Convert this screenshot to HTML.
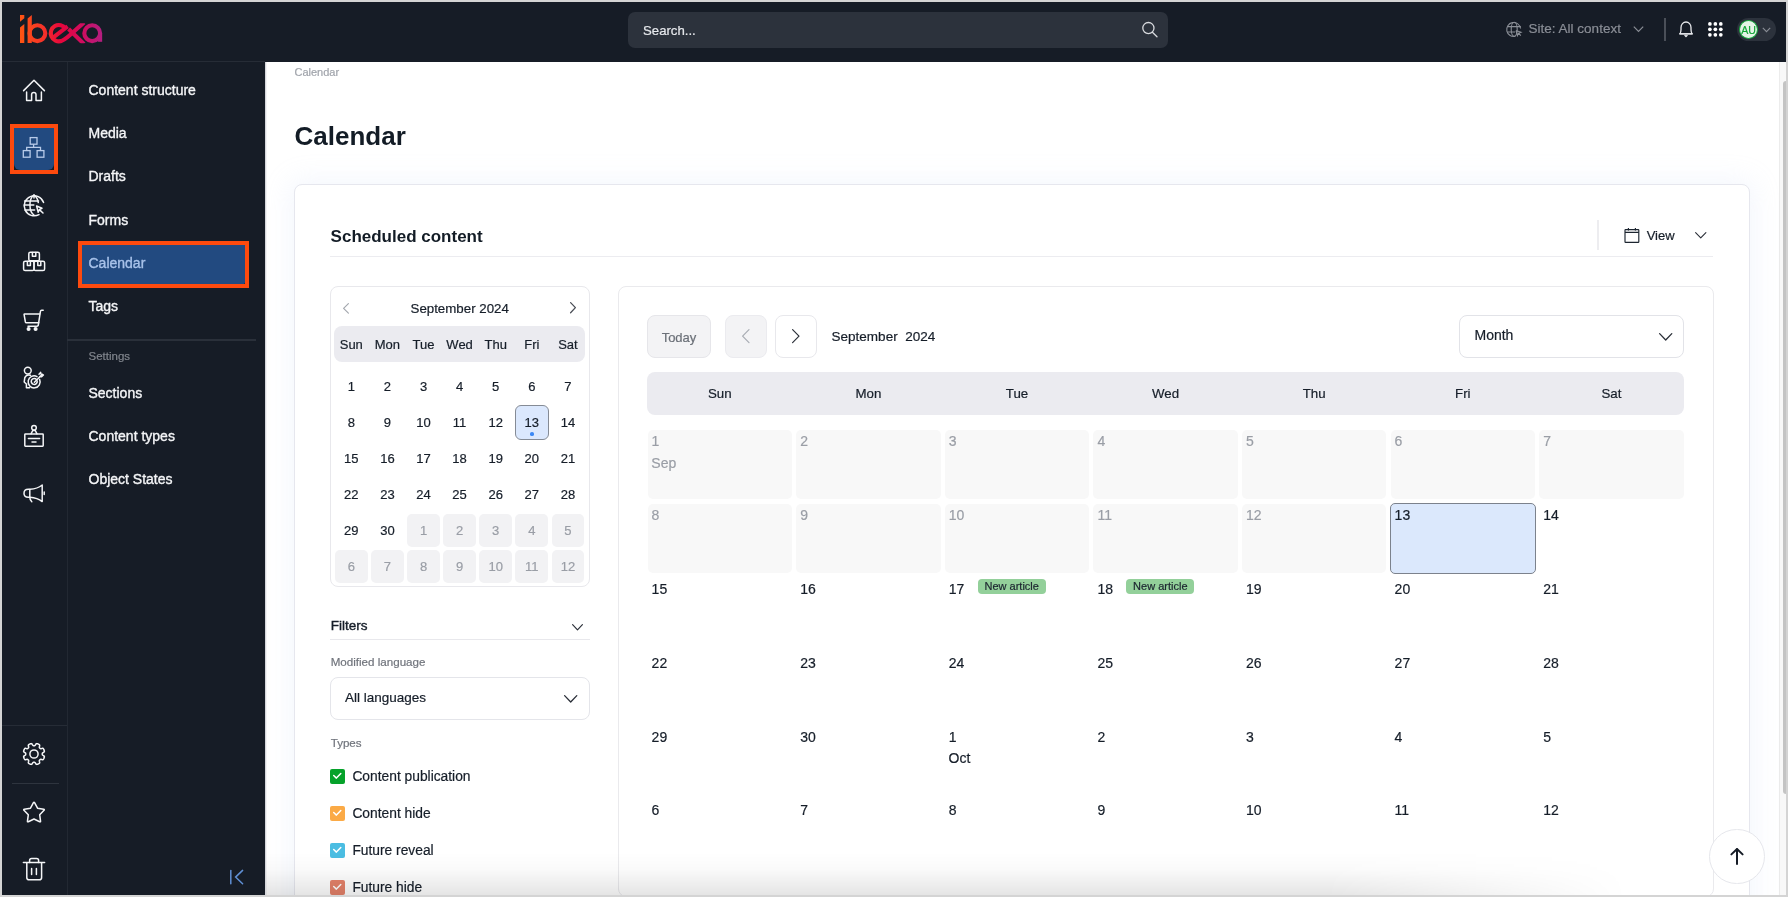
<!DOCTYPE html>
<html><head><meta charset="utf-8">
<style>
html,body{margin:0;padding:0;}
body{width:1788px;height:897px;overflow:hidden;background:#d4d4d4;position:relative;font-family:"Liberation Sans",sans-serif;-webkit-font-smoothing:antialiased;}
#root{position:absolute;left:0;top:0;width:1788px;height:897px;will-change:transform;}
.t{position:absolute;white-space:nowrap;line-height:1;-webkit-text-stroke-width:0.2px;}
.r{position:absolute;box-sizing:border-box;}
svg{position:absolute;overflow:visible;}
</style></head><body><div id="root">
<div class="r" style="left:2px;top:2px;width:1784px;height:893px;background:#ffffff;"></div><div class="r" style="left:2px;top:2px;width:1784px;height:60px;background:#161c26;"></div><div class="r" style="left:2px;top:61px;width:263px;height:1px;background:#262c36;"></div><svg style="left:0;top:0" width="120" height="60" viewBox="0 0 120 60">
<defs><linearGradient id="lg" x1="20" y1="0" x2="102" y2="0" gradientUnits="userSpaceOnUse">
<stop offset="0" stop-color="#ff5512"/><stop offset="0.3" stop-color="#f5302a"/><stop offset="0.5" stop-color="#e6063c"/><stop offset="0.75" stop-color="#d10c5e"/><stop offset="1" stop-color="#b41e80"/></linearGradient><clipPath id="xc"><rect x="0" y="23.3" width="120" height="19.9"/></clipPath></defs>
<g fill="url(#lg)" stroke="none">
<path d="M20 15 L24.3 15 L24.3 18.2 L20 21.8 Z"/>
<path d="M20 27.6 L24.3 24 L24.3 43 L20 43 Z"/>
<path d="M27.6 18.6 L31.8 15 L31.8 43 L27.6 43 Z"/>
</g>
<g fill="none" stroke="url(#lg)" stroke-width="4.1">
<circle cx="37.4" cy="33.2" r="7.9"/>
<path d="M65.6 28.4 A8.2 8.2 0 1 0 61.4 41"/>
<path clip-path="url(#xc)" d="M59.5 41.6 C63 41 66 38.6 70 35 L84 22.4"/>
<path d="M53.4 37.4 L67.6 26.4"/>
<path clip-path="url(#xc)" d="M68.6 29 L84 44"/>
<circle cx="92.2" cy="33.2" r="7.9"/>
<path d="M100.1 33.2 V41.8"/>
</g>
</svg><div class="r" style="left:628px;top:12px;width:540px;height:36px;background:#2c323c;border-radius:7px;"></div><div class="t " style="left:643px;top:23.73px;font-size:13.2px;color:#e6e8ec;font-weight:400;">Search...</div><svg style="left:1140px;top:20px" width="20" height="20" viewBox="0 0 20 20">
<circle cx="8.4" cy="8.1" r="5.6" fill="none" stroke="#d8dade" stroke-width="1.3"/>
<path d="M12.4 12.2 L17 16.8" stroke="#d8dade" stroke-width="1.3" stroke-linecap="round"/></svg><svg style="left:1506px;top:21px" width="17" height="17" viewBox="0 0 17 17">
<g fill="none" stroke="#8a8e96" stroke-width="1.1">
<path d="M14.6 7.5 A7 7 0 1 0 9.5 15.3"/>
<ellipse cx="8.2" cy="8.3" rx="3" ry="7"/>
<path d="M1.4 5.6 H14.8 M1.4 11 H9"/>
<path d="M10 9.5 L15 11.3 L12.6 12.2 L14.8 14.6 M10 9.5 L11.4 14.6 L12.4 12.3"/>
</g></svg><div class="t " style="left:1528.6px;top:21.67px;font-size:13.5px;color:#8a8e96;font-weight:400;">Site: All context</div><svg style="left:1632px;top:24px" width="13" height="10" viewBox="0 0 13 10">
<path d="M1.8 2.6 L6.5 7.4 L11.2 2.6" fill="none" stroke="#8a8e96" stroke-width="1.2"/></svg><div class="r" style="left:1664px;top:18px;width:2px;height:23px;background:#4a4f58;"></div><svg style="left:1676px;top:19px" width="20" height="21" viewBox="0 0 20 21">
<g fill="none" stroke="#e8e9ec" stroke-width="1.3" stroke-linejoin="round">
<path d="M4 14.8 C4.6 13.6 5 12.6 5 10.6 L5 8.5 C5 5.4 7.2 3 10 3 C12.8 3 15 5.4 15 8.5 L15 10.6 C15 12.6 15.4 13.6 16 14.8 Z"/>
<path d="M3.2 14.8 H16.8"/>
<path d="M8.6 16 L10 17.6 L11.4 16"/>
</g></svg><svg style="left:1708.1px;top:22.2px" width="15" height="15" viewBox="0 0 15 15"><g fill="#ffffff"><circle cx="1.90" cy="1.90" r="1.85"/><circle cx="1.90" cy="7.35" r="1.85"/><circle cx="1.90" cy="12.80" r="1.85"/><circle cx="7.35" cy="1.90" r="1.85"/><circle cx="7.35" cy="7.35" r="1.85"/><circle cx="7.35" cy="12.80" r="1.85"/><circle cx="12.80" cy="1.90" r="1.85"/><circle cx="12.80" cy="7.35" r="1.85"/><circle cx="12.80" cy="12.80" r="1.85"/></g></svg><div class="r" style="left:1737px;top:18px;width:39px;height:23px;background:#2c323c;border-radius:12px;"></div><div class="r" style="left:1739.2px;top:19.9px;width:18.8px;height:19px;background:#e4f4e6;border:1.3px solid #16a83c;border-radius:50%;"></div><div class="t" style="left:1648.6px;width:200px;text-align:center;top:24.73px;font-size:10.6px;color:#12a536;font-weight:400;">AU</div><svg style="left:1761px;top:25px" width="11" height="9" viewBox="0 0 11 9">
<path d="M1.8 2.8 L5.5 6.6 L9.2 2.8" fill="none" stroke="#8a8e96" stroke-width="1.1"/></svg><div class="r" style="left:2px;top:62px;width:263px;height:833px;background:#161c26;"></div><div class="r" style="left:67px;top:62px;width:1px;height:833px;background:#222832;"></div><svg style="left:14px;top:70px" width="40" height="40" viewBox="0 0 40 40"><g fill="none" stroke="#f4f5f7" stroke-width="1.5" stroke-linecap="round" stroke-linejoin="round"><path d="M9.6 20.6 L20 10.3 L30.4 20.6"/><path d="M12.6 22 V30.4 H17.6 V24.6 A2.2 2.2 0 0 1 22 24.6 V30.4 H27.4 V22"/></g></svg><div class="r" style="left:10px;top:124px;width:48px;height:50px;border:4px solid #fd4a0e;"></div><div class="r" style="left:14px;top:128px;width:40px;height:42px;background:#224a80;border-radius:0 0 6px 6px;"></div><svg style="left:14px;top:128px" width="40" height="42" viewBox="0 0 40 42"><g fill="none" stroke="#b8cbe9" stroke-width="1.3"><rect x="16.2" y="9.6" width="6.8" height="6.6"/><rect x="9.3" y="22.6" width="6.8" height="6.6"/><rect x="23.1" y="22.6" width="6.8" height="6.6"/><path d="M19.6 16.2 V19.4 M12.7 22.6 V19.4 H26.5 V22.6"/></g></svg><svg style="left:14px;top:185px" width="40" height="40" viewBox="0 0 40 40"><g fill="none" stroke="#f4f5f7" stroke-width="1.5" stroke-linecap="round" stroke-linejoin="round"><path d="M29.6 17.4 A10 10 0 1 0 25 29.6"/><path d="M20 10 C14.6 13.6 14.6 26.4 20 30 M20 10 C22.6 12 24 14.6 24.3 17.6"/><path d="M10.6 16 H24.5 M10.2 20 H19.8 M11 25 H20.6 M20 10 V13"/><path d="M22.6 21 L28 23.3 L25.4 24.6 L29 28 M22.6 21 L24.2 27.2 L25.4 24.6"/></g></svg><svg style="left:14px;top:242px" width="40" height="40" viewBox="0 0 40 40"><g fill="none" stroke="#f4f5f7" stroke-width="1.5" stroke-linecap="round" stroke-linejoin="round"><rect x="14.8" y="10.2" width="10.6" height="8.6" rx="1.6"/><path d="M18.4 10.4 V14.2 H21.8 V10.4"/><rect x="9.6" y="19.2" width="10.4" height="9.4" rx="1.6"/><rect x="20" y="19.2" width="10.6" height="9.4" rx="1.6"/><path d="M13.4 19.4 V23.4 H16.4 V19.4 M23.8 19.4 V23.4 H26.8 V19.4"/></g></svg><svg style="left:14px;top:300px" width="40" height="40" viewBox="0 0 40 40"><g fill="none" stroke="#f4f5f7" stroke-width="1.5" stroke-linecap="round" stroke-linejoin="round"><path d="M29.2 10.3 H27.6 Q26.6 10.3 26.4 11.6 L24.2 25.6 Q24 26.2 23.2 26.2 H14"/><path d="M25.6 14 H10.4 Q10 14 10.1 14.6 L11.4 22 Q11.6 22.8 12.4 22.8 H24.8"/><circle cx="14.6" cy="29" r="1.3" fill="#f4f5f7"/><circle cx="21.6" cy="29" r="1.3" fill="#f4f5f7"/></g></svg><svg style="left:14px;top:358px" width="40" height="40" viewBox="0 0 40 40"><g fill="none" stroke="#f4f5f7" stroke-width="1.5" stroke-linecap="round" stroke-linejoin="round"><circle cx="13.8" cy="12.6" r="3.4"/><path d="M16.4 17.2 C14 16.6 11.8 17.6 10.8 19.6 L10.2 24 L12.4 26 V29.8 H15.6"/><path d="M25.6 21.4 A6 6 0 1 1 23 18.6"/><path d="M22.6 21.6 A3 3 0 1 0 23.2 23"/><path d="M20.4 24.2 L28.4 16.2"/><path d="M25 16.2 L26.6 14.4 L27.2 16.4 L29.4 17 L27.6 18.8 L25.8 18.4"/></g></svg><svg style="left:14px;top:415px" width="40" height="40" viewBox="0 0 40 40"><g fill="none" stroke="#f4f5f7" stroke-width="1.5" stroke-linecap="round" stroke-linejoin="round"><circle cx="20" cy="12.8" r="2.3"/><path d="M17 18.8 L18.8 15.4 H21.2 L23 18.8"/><rect x="10.8" y="19" width="18.4" height="12.2" rx="0.6"/><path d="M14.4 23.4 H25.6 M18 27 H22"/></g></svg><svg style="left:14px;top:473px" width="40" height="40" viewBox="0 0 40 40"><g fill="none" stroke="#f4f5f7" stroke-width="1.5" stroke-linecap="round" stroke-linejoin="round"><path d="M28.2 12 V28.6 C25 26 21 24.6 16 24.2 H14.2 C11.4 24.2 10 22.6 10 20.2 C10 17.8 11.4 16.2 14.2 16.2 H16 C21 16 25 14.6 28.2 12 Z"/><path d="M15.8 16.4 V24 C15.8 26 16.4 27.6 17.8 28.8"/><path d="M30.2 19 V21.6"/></g></svg><div class="r" style="left:2px;top:725px;width:65px;height:1px;background:#262c36;"></div><svg style="left:14px;top:734px" width="40" height="40" viewBox="0 0 40 40"><g fill="none" stroke="#f4f5f7" stroke-width="1.5" stroke-linecap="round" stroke-linejoin="round"><path d="M20.00 11.75 L20.22 11.74 L20.43 11.73 L20.65 11.68 L20.89 11.57 L21.15 11.30 L21.46 10.81 L21.81 10.21 L22.17 9.80 L22.49 9.64 L22.78 9.62 L23.06 9.66 L23.33 9.74 L23.60 9.82 L23.87 9.92 L24.13 10.02 L24.39 10.13 L24.65 10.25 L24.90 10.38 L25.14 10.53 L25.37 10.69 L25.57 10.92 L25.68 11.26 L25.64 11.80 L25.47 12.47 L25.34 13.04 L25.34 13.41 L25.42 13.65 L25.54 13.84 L25.69 14.01 L25.84 14.16 L25.99 14.31 L26.16 14.46 L26.35 14.58 L26.59 14.66 L26.96 14.66 L27.53 14.53 L28.20 14.36 L28.74 14.32 L29.08 14.43 L29.31 14.63 L29.47 14.86 L29.62 15.10 L29.75 15.35 L29.87 15.61 L29.98 15.87 L30.08 16.13 L30.18 16.40 L30.26 16.67 L30.34 16.94 L30.38 17.22 L30.36 17.51 L30.20 17.83 L29.79 18.19 L29.19 18.54 L28.70 18.85 L28.43 19.11 L28.32 19.35 L28.27 19.57 L28.26 19.78 L28.25 20.00 L28.26 20.22 L28.27 20.43 L28.32 20.65 L28.43 20.89 L28.70 21.15 L29.19 21.46 L29.79 21.81 L30.20 22.17 L30.36 22.49 L30.38 22.78 L30.34 23.06 L30.26 23.33 L30.18 23.60 L30.08 23.87 L29.98 24.13 L29.87 24.39 L29.75 24.65 L29.62 24.90 L29.47 25.14 L29.31 25.37 L29.08 25.57 L28.74 25.68 L28.20 25.64 L27.53 25.47 L26.96 25.34 L26.59 25.34 L26.35 25.42 L26.16 25.54 L25.99 25.69 L25.84 25.84 L25.69 25.99 L25.54 26.16 L25.42 26.35 L25.34 26.59 L25.34 26.96 L25.47 27.53 L25.64 28.20 L25.68 28.74 L25.57 29.08 L25.37 29.31 L25.14 29.47 L24.90 29.62 L24.65 29.75 L24.39 29.87 L24.13 29.98 L23.87 30.08 L23.60 30.18 L23.33 30.26 L23.06 30.34 L22.78 30.38 L22.49 30.36 L22.17 30.20 L21.81 29.79 L21.46 29.19 L21.15 28.70 L20.89 28.43 L20.65 28.32 L20.43 28.27 L20.22 28.26 L20.00 28.25 L19.78 28.26 L19.57 28.27 L19.35 28.32 L19.11 28.43 L18.85 28.70 L18.54 29.19 L18.19 29.79 L17.83 30.20 L17.51 30.36 L17.22 30.38 L16.94 30.34 L16.67 30.26 L16.40 30.18 L16.13 30.08 L15.87 29.98 L15.61 29.87 L15.35 29.75 L15.10 29.62 L14.86 29.47 L14.63 29.31 L14.43 29.08 L14.32 28.74 L14.36 28.20 L14.53 27.53 L14.66 26.96 L14.66 26.59 L14.58 26.35 L14.46 26.16 L14.31 25.99 L14.16 25.84 L14.01 25.69 L13.84 25.54 L13.65 25.42 L13.41 25.34 L13.04 25.34 L12.47 25.47 L11.80 25.64 L11.26 25.68 L10.92 25.57 L10.69 25.37 L10.53 25.14 L10.38 24.90 L10.25 24.65 L10.13 24.39 L10.02 24.13 L9.92 23.87 L9.82 23.60 L9.74 23.33 L9.66 23.06 L9.62 22.78 L9.64 22.49 L9.80 22.17 L10.21 21.81 L10.81 21.46 L11.30 21.15 L11.57 20.89 L11.68 20.65 L11.73 20.43 L11.74 20.22 L11.75 20.00 L11.74 19.78 L11.73 19.57 L11.68 19.35 L11.57 19.11 L11.30 18.85 L10.81 18.54 L10.21 18.19 L9.80 17.83 L9.64 17.51 L9.62 17.22 L9.66 16.94 L9.74 16.67 L9.82 16.40 L9.92 16.13 L10.02 15.87 L10.13 15.61 L10.25 15.35 L10.38 15.10 L10.53 14.86 L10.69 14.63 L10.92 14.43 L11.26 14.32 L11.80 14.36 L12.47 14.53 L13.04 14.66 L13.41 14.66 L13.65 14.58 L13.84 14.46 L14.01 14.31 L14.16 14.16 L14.31 14.01 L14.46 13.84 L14.58 13.65 L14.66 13.41 L14.66 13.04 L14.53 12.47 L14.36 11.80 L14.32 11.26 L14.43 10.92 L14.63 10.69 L14.86 10.53 L15.10 10.38 L15.35 10.25 L15.61 10.13 L15.87 10.02 L16.13 9.92 L16.40 9.82 L16.67 9.74 L16.94 9.66 L17.22 9.62 L17.51 9.64 L17.83 9.80 L18.19 10.21 L18.54 10.81 L18.85 11.30 L19.11 11.57 L19.35 11.68 L19.57 11.73 L19.78 11.74 Z"/><circle cx="20" cy="20" r="4.1"/></g></svg><div class="r" style="left:12px;top:783px;width:47px;height:1px;background:#2e343e;"></div><svg style="left:14px;top:792px" width="40" height="40" viewBox="0 0 40 40"><g fill="none" stroke="#f4f5f7" stroke-width="1.5" stroke-linecap="round" stroke-linejoin="round"><path d="M19.44 10.65 Q20.00 9.60 20.56 10.65 L23.53 16.15 L29.67 17.26 Q30.84 17.48 30.02 18.34 L25.71 22.85 L26.54 29.04 Q26.70 30.22 25.63 29.71 L20.00 27.00 L14.37 29.71 Q13.30 30.22 13.46 29.04 L14.29 22.85 L9.98 18.34 Q9.16 17.48 10.33 17.26 L16.47 16.15 Z"/></g></svg><svg style="left:14px;top:849px" width="40" height="40" viewBox="0 0 40 40"><g fill="none" stroke="#f4f5f7" stroke-width="1.5" stroke-linecap="round" stroke-linejoin="round"><path d="M9.4 13.6 H30.6"/><path d="M15.6 13.4 V11.6 Q15.6 9.6 17.6 9.6 H22.6 Q24.6 9.6 24.6 11.6 V13.4"/><path d="M12.8 13.8 V28.4 Q12.8 30.8 15.2 30.8 H25.2 Q27.6 30.8 27.6 28.4 V13.8"/><path d="M17.6 19.4 V25.6 M22.4 19.4 V25.6"/></g></svg><div class="t " style="left:88.5px;top:83.25px;font-size:14px;color:#f4f5f7;font-weight:400;-webkit-text-stroke:0.35px #f4f5f7;">Content structure</div><div class="t " style="left:88.5px;top:126.35px;font-size:14px;color:#f4f5f7;font-weight:400;-webkit-text-stroke:0.35px #f4f5f7;">Media</div><div class="t " style="left:88.5px;top:169.45px;font-size:14px;color:#f4f5f7;font-weight:400;-webkit-text-stroke:0.35px #f4f5f7;">Drafts</div><div class="t " style="left:88.5px;top:212.55px;font-size:14px;color:#f4f5f7;font-weight:400;-webkit-text-stroke:0.35px #f4f5f7;">Forms</div><div class="r" style="left:82px;top:244.5px;width:164px;height:40px;background:#224a80;border-radius:0 0 5px 0;"></div><div class="r" style="left:78px;top:241px;width:171px;height:47px;border:4px solid #fd4a0e;"></div><div class="t " style="left:88.5px;top:256.35px;font-size:14px;color:#a9c3ea;font-weight:400;-webkit-text-stroke:0.35px #a9c3ea;">Calendar</div><div class="t " style="left:88.5px;top:298.95px;font-size:14px;color:#f4f5f7;font-weight:400;-webkit-text-stroke:0.35px #f4f5f7;">Tags</div><div class="r" style="left:67px;top:339px;width:189px;height:1.5px;background:#2a303a;"></div><div class="t " style="left:88.5px;top:351.27px;font-size:11.5px;color:#80858d;font-weight:400;">Settings</div><div class="t " style="left:88.5px;top:385.85px;font-size:14px;color:#f4f5f7;font-weight:400;-webkit-text-stroke:0.35px #f4f5f7;">Sections</div><div class="t " style="left:88.5px;top:428.95px;font-size:14px;color:#f4f5f7;font-weight:400;-webkit-text-stroke:0.35px #f4f5f7;">Content types</div><div class="t " style="left:88.5px;top:472.05px;font-size:14px;color:#f4f5f7;font-weight:400;-webkit-text-stroke:0.35px #f4f5f7;">Object States</div><svg style="left:226px;top:866px" width="20" height="22" viewBox="0 0 20 22"><g fill="none" stroke="#5f8fd4" stroke-width="1.5" stroke-linecap="round"><path d="M4.8 4.4 V17.8"/><path d="M16.6 4.4 L9.6 11.1 L16.6 17.8"/></g></svg><div style="position:absolute;left:0;top:0;width:1788px;height:897px;clip-path:inset(62px 2px 2px 265px);"><div class="r" style="left:1779px;top:62px;width:7px;height:833px;background:#f8f8f8;border-left:1px solid #ececec;"></div><div class="r" style="left:1783px;top:81px;width:3px;height:713px;background:#c4c4c4;border-radius:3px 0 0 3px;"></div><div class="r" style="left:265px;top:62px;width:1px;height:833px;background:#d6d7db;"></div><div class="r" style="left:266px;top:62px;width:1px;height:833px;background:#f3f3f5;"></div><div class="t " style="left:294.5px;top:67.19px;font-size:11px;color:#a0a4ab;font-weight:400;">Calendar</div><div class="t " style="left:294.5px;top:123.29px;font-size:26px;color:#131c26;font-weight:700;-webkit-text-stroke-width:0;">Calendar</div><div class="r" style="left:294px;top:184px;width:1456px;height:760px;background:#fff;border:1px solid #e6e7ee;border-radius:8px;box-shadow:0 0 26px 5px rgba(190,205,245,0.17);"></div><div class="t " style="left:330.6px;top:227.51px;font-size:17px;color:#131c26;font-weight:700;-webkit-text-stroke-width:0;">Scheduled content</div><div class="r" style="left:330px;top:256px;width:1383px;height:1px;background:#ececf0;"></div><div class="r" style="left:1597px;top:220px;width:1.5px;height:30px;background:#ededf0;"></div><svg style="left:1623px;top:226px" width="18" height="18" viewBox="0 0 18 18"><g fill="none" stroke="#1c2530" stroke-width="1.15"><rect x="2" y="3.6" width="13.8" height="12.8" rx="0.6"/><path d="M2 6.4 H15.8 M5.4 2 V4.6 M12.4 2 V4.6"/></g></svg><div class="t " style="left:1646.7px;top:228.50px;font-size:13px;color:#161e29;font-weight:400;">View</div><svg style="left:1694.5px;top:232px" width="11.5" height="6.5" viewBox="0 0 11.5 6.5"><path d="M0.6 0.6 L5.75 5.9 L10.9 0.6" fill="none" stroke="#2a2f38" stroke-width="1.1" stroke-linecap="round" stroke-linejoin="round"/></svg><div class="r" style="left:330px;top:286px;width:260px;height:301px;background:#fff;border:1px solid #e8e8ec;border-radius:8px;"></div><svg style="left:343.3px;top:302.5px" width="6" height="10.8" viewBox="0 0 6 10.8"><path d="M5.4 0.6 L0.6 5.4 L5.4 10.200000000000001" fill="none" stroke="#a3a7ae" stroke-width="1.15" stroke-linecap="round" stroke-linejoin="round"/></svg><svg style="left:569.6px;top:302.2px" width="6" height="11.4" viewBox="0 0 6 11.4"><path d="M0.6 0.6 L5.4 5.7 L0.6 10.8" fill="none" stroke="#484c54" stroke-width="1.25" stroke-linecap="round" stroke-linejoin="round"/></svg><div class="t" style="left:359.7px;width:200px;text-align:center;top:301.54px;font-size:13.3px;color:#161e29;font-weight:400;">September 2024</div><div class="r" style="left:334px;top:326px;width:251px;height:36px;background:#ebebf0;border-radius:8px;"></div><div class="t" style="left:251.3px;width:200px;text-align:center;top:337.60px;font-size:13px;color:#161e29;font-weight:400;">Sun</div><div class="t" style="left:287.40000000000003px;width:200px;text-align:center;top:337.60px;font-size:13px;color:#161e29;font-weight:400;">Mon</div><div class="t" style="left:323.5px;width:200px;text-align:center;top:337.60px;font-size:13px;color:#161e29;font-weight:400;">Tue</div><div class="t" style="left:359.6px;width:200px;text-align:center;top:337.60px;font-size:13px;color:#161e29;font-weight:400;">Wed</div><div class="t" style="left:395.70000000000005px;width:200px;text-align:center;top:337.60px;font-size:13px;color:#161e29;font-weight:400;">Thu</div><div class="t" style="left:431.79999999999995px;width:200px;text-align:center;top:337.60px;font-size:13px;color:#161e29;font-weight:400;">Fri</div><div class="t" style="left:467.9000000000001px;width:200px;text-align:center;top:337.60px;font-size:13px;color:#161e29;font-weight:400;">Sat</div><div class="t" style="left:251.3px;width:200px;text-align:center;top:380.00px;font-size:13px;color:#161e29;font-weight:400;">1</div><div class="t" style="left:287.40000000000003px;width:200px;text-align:center;top:380.00px;font-size:13px;color:#161e29;font-weight:400;">2</div><div class="t" style="left:323.5px;width:200px;text-align:center;top:380.00px;font-size:13px;color:#161e29;font-weight:400;">3</div><div class="t" style="left:359.6px;width:200px;text-align:center;top:380.00px;font-size:13px;color:#161e29;font-weight:400;">4</div><div class="t" style="left:395.70000000000005px;width:200px;text-align:center;top:380.00px;font-size:13px;color:#161e29;font-weight:400;">5</div><div class="t" style="left:431.79999999999995px;width:200px;text-align:center;top:380.00px;font-size:13px;color:#161e29;font-weight:400;">6</div><div class="t" style="left:467.9000000000001px;width:200px;text-align:center;top:380.00px;font-size:13px;color:#161e29;font-weight:400;">7</div><div class="t" style="left:251.3px;width:200px;text-align:center;top:416.00px;font-size:13px;color:#161e29;font-weight:400;">8</div><div class="t" style="left:287.40000000000003px;width:200px;text-align:center;top:416.00px;font-size:13px;color:#161e29;font-weight:400;">9</div><div class="t" style="left:323.5px;width:200px;text-align:center;top:416.00px;font-size:13px;color:#161e29;font-weight:400;">10</div><div class="t" style="left:359.6px;width:200px;text-align:center;top:416.00px;font-size:13px;color:#161e29;font-weight:400;">11</div><div class="t" style="left:395.70000000000005px;width:200px;text-align:center;top:416.00px;font-size:13px;color:#161e29;font-weight:400;">12</div><div class="r" style="left:515.2px;top:405.1px;width:33.8px;height:34.5px;background:#dbe8fd;border:1.2px solid #858b95;border-radius:6px;"></div><div class="r" style="left:529.9px;top:432.1px;width:3.7px;height:3.7px;background:#3b88f5;border-radius:50%;"></div><div class="t" style="left:431.79999999999995px;width:200px;text-align:center;top:416.00px;font-size:13px;color:#161e29;font-weight:400;">13</div><div class="t" style="left:467.9000000000001px;width:200px;text-align:center;top:416.00px;font-size:13px;color:#161e29;font-weight:400;">14</div><div class="t" style="left:251.3px;width:200px;text-align:center;top:452.00px;font-size:13px;color:#161e29;font-weight:400;">15</div><div class="t" style="left:287.40000000000003px;width:200px;text-align:center;top:452.00px;font-size:13px;color:#161e29;font-weight:400;">16</div><div class="t" style="left:323.5px;width:200px;text-align:center;top:452.00px;font-size:13px;color:#161e29;font-weight:400;">17</div><div class="t" style="left:359.6px;width:200px;text-align:center;top:452.00px;font-size:13px;color:#161e29;font-weight:400;">18</div><div class="t" style="left:395.70000000000005px;width:200px;text-align:center;top:452.00px;font-size:13px;color:#161e29;font-weight:400;">19</div><div class="t" style="left:431.79999999999995px;width:200px;text-align:center;top:452.00px;font-size:13px;color:#161e29;font-weight:400;">20</div><div class="t" style="left:467.9000000000001px;width:200px;text-align:center;top:452.00px;font-size:13px;color:#161e29;font-weight:400;">21</div><div class="t" style="left:251.3px;width:200px;text-align:center;top:488.00px;font-size:13px;color:#161e29;font-weight:400;">22</div><div class="t" style="left:287.40000000000003px;width:200px;text-align:center;top:488.00px;font-size:13px;color:#161e29;font-weight:400;">23</div><div class="t" style="left:323.5px;width:200px;text-align:center;top:488.00px;font-size:13px;color:#161e29;font-weight:400;">24</div><div class="t" style="left:359.6px;width:200px;text-align:center;top:488.00px;font-size:13px;color:#161e29;font-weight:400;">25</div><div class="t" style="left:395.70000000000005px;width:200px;text-align:center;top:488.00px;font-size:13px;color:#161e29;font-weight:400;">26</div><div class="t" style="left:431.79999999999995px;width:200px;text-align:center;top:488.00px;font-size:13px;color:#161e29;font-weight:400;">27</div><div class="t" style="left:467.9000000000001px;width:200px;text-align:center;top:488.00px;font-size:13px;color:#161e29;font-weight:400;">28</div><div class="t" style="left:251.3px;width:200px;text-align:center;top:524.00px;font-size:13px;color:#161e29;font-weight:400;">29</div><div class="t" style="left:287.40000000000003px;width:200px;text-align:center;top:524.00px;font-size:13px;color:#161e29;font-weight:400;">30</div><div class="r" style="left:407.1px;top:513.8px;width:32.8px;height:32.8px;background:#f2f2f4;border-radius:5px;"></div><div class="t" style="left:323.5px;width:200px;text-align:center;top:524.00px;font-size:13px;color:#9a9ea6;font-weight:400;">1</div><div class="r" style="left:443.20000000000005px;top:513.8px;width:32.8px;height:32.8px;background:#f2f2f4;border-radius:5px;"></div><div class="t" style="left:359.6px;width:200px;text-align:center;top:524.00px;font-size:13px;color:#9a9ea6;font-weight:400;">2</div><div class="r" style="left:479.30000000000007px;top:513.8px;width:32.8px;height:32.8px;background:#f2f2f4;border-radius:5px;"></div><div class="t" style="left:395.70000000000005px;width:200px;text-align:center;top:524.00px;font-size:13px;color:#9a9ea6;font-weight:400;">3</div><div class="r" style="left:515.4px;top:513.8px;width:32.8px;height:32.8px;background:#f2f2f4;border-radius:5px;"></div><div class="t" style="left:431.79999999999995px;width:200px;text-align:center;top:524.00px;font-size:13px;color:#9a9ea6;font-weight:400;">4</div><div class="r" style="left:551.5000000000001px;top:513.8px;width:32.8px;height:32.8px;background:#f2f2f4;border-radius:5px;"></div><div class="t" style="left:467.9000000000001px;width:200px;text-align:center;top:524.00px;font-size:13px;color:#9a9ea6;font-weight:400;">5</div><div class="r" style="left:334.90000000000003px;top:549.8px;width:32.8px;height:32.8px;background:#f2f2f4;border-radius:5px;"></div><div class="t" style="left:251.3px;width:200px;text-align:center;top:560.00px;font-size:13px;color:#9a9ea6;font-weight:400;">6</div><div class="r" style="left:371.00000000000006px;top:549.8px;width:32.8px;height:32.8px;background:#f2f2f4;border-radius:5px;"></div><div class="t" style="left:287.40000000000003px;width:200px;text-align:center;top:560.00px;font-size:13px;color:#9a9ea6;font-weight:400;">7</div><div class="r" style="left:407.1px;top:549.8px;width:32.8px;height:32.8px;background:#f2f2f4;border-radius:5px;"></div><div class="t" style="left:323.5px;width:200px;text-align:center;top:560.00px;font-size:13px;color:#9a9ea6;font-weight:400;">8</div><div class="r" style="left:443.20000000000005px;top:549.8px;width:32.8px;height:32.8px;background:#f2f2f4;border-radius:5px;"></div><div class="t" style="left:359.6px;width:200px;text-align:center;top:560.00px;font-size:13px;color:#9a9ea6;font-weight:400;">9</div><div class="r" style="left:479.30000000000007px;top:549.8px;width:32.8px;height:32.8px;background:#f2f2f4;border-radius:5px;"></div><div class="t" style="left:395.70000000000005px;width:200px;text-align:center;top:560.00px;font-size:13px;color:#9a9ea6;font-weight:400;">10</div><div class="r" style="left:515.4px;top:549.8px;width:32.8px;height:32.8px;background:#f2f2f4;border-radius:5px;"></div><div class="t" style="left:431.79999999999995px;width:200px;text-align:center;top:560.00px;font-size:13px;color:#9a9ea6;font-weight:400;">11</div><div class="r" style="left:551.5000000000001px;top:549.8px;width:32.8px;height:32.8px;background:#f2f2f4;border-radius:5px;"></div><div class="t" style="left:467.9000000000001px;width:200px;text-align:center;top:560.00px;font-size:13px;color:#9a9ea6;font-weight:400;">12</div><div class="t " style="left:330.7px;top:619.27px;font-size:13.5px;color:#161e29;font-weight:400;-webkit-text-stroke-width:0.4px;">Filters</div><svg style="left:571.5px;top:623.5px" width="11" height="6.5" viewBox="0 0 11 6.5"><path d="M0.6 0.6 L5.5 5.9 L10.4 0.6" fill="none" stroke="#2a2f38" stroke-width="1.15" stroke-linecap="round" stroke-linejoin="round"/></svg><div class="r" style="left:330px;top:638.5px;width:260px;height:1px;background:#e8e8ec;"></div><div class="t " style="left:330.7px;top:655.98px;font-size:11.6px;color:#70747c;font-weight:400;">Modified language</div><div class="r" style="left:330px;top:677px;width:260px;height:43px;background:#fff;border:1px solid #e4e5ea;border-radius:8px;"></div><div class="t " style="left:345px;top:690.57px;font-size:13.5px;color:#161e29;font-weight:400;">All languages</div><svg style="left:563.6px;top:695.4px" width="13.4" height="7.6" viewBox="0 0 13.4 7.6"><path d="M0.6 0.6 L6.7 7.0 L12.8 0.6" fill="none" stroke="#2a2f38" stroke-width="1.3" stroke-linecap="round" stroke-linejoin="round"/></svg><div class="t " style="left:330.7px;top:737.18px;font-size:11.6px;color:#70747c;font-weight:400;">Types</div><div class="r" style="left:330px;top:769.2px;width:14.6px;height:14.6px;background:#05a22a;border-radius:2px;"></div><svg style="left:330px;top:769.2px" width="15" height="15" viewBox="0 0 15 15"><path d="M3.7 6.5 L6.4 9.1 L10.8 4.5" fill="none" stroke="#fff" stroke-width="1.5" stroke-linecap="round" stroke-linejoin="round"/></svg><div class="t " style="left:352.4px;top:769.82px;font-size:13.8px;color:#161e29;font-weight:400;">Content publication</div><div class="r" style="left:330px;top:806.2px;width:14.6px;height:14.6px;background:#fbaa46;border-radius:2px;"></div><svg style="left:330px;top:806.2px" width="15" height="15" viewBox="0 0 15 15"><path d="M3.7 6.5 L6.4 9.1 L10.8 4.5" fill="none" stroke="#fff" stroke-width="1.5" stroke-linecap="round" stroke-linejoin="round"/></svg><div class="t " style="left:352.4px;top:806.82px;font-size:13.8px;color:#161e29;font-weight:400;">Content hide</div><div class="r" style="left:330px;top:843.2px;width:14.6px;height:14.6px;background:#4bbde2;border-radius:2px;"></div><svg style="left:330px;top:843.2px" width="15" height="15" viewBox="0 0 15 15"><path d="M3.7 6.5 L6.4 9.1 L10.8 4.5" fill="none" stroke="#fff" stroke-width="1.5" stroke-linecap="round" stroke-linejoin="round"/></svg><div class="t " style="left:352.4px;top:843.82px;font-size:13.8px;color:#161e29;font-weight:400;">Future reveal</div><div class="r" style="left:330px;top:880.2px;width:14.6px;height:14.6px;background:#e5826a;border-radius:2px;"></div><svg style="left:330px;top:880.2px" width="15" height="15" viewBox="0 0 15 15"><path d="M3.7 6.5 L6.4 9.1 L10.8 4.5" fill="none" stroke="#fff" stroke-width="1.5" stroke-linecap="round" stroke-linejoin="round"/></svg><div class="t " style="left:352.4px;top:880.82px;font-size:13.8px;color:#161e29;font-weight:400;">Future hide</div><div class="r" style="left:618px;top:286px;width:1096px;height:611px;background:#fff;border:1px solid #eaeaed;border-radius:8px;"></div><div class="r" style="left:647px;top:315px;width:64px;height:43px;background:#f3f3f5;border:1px solid #e6e6ea;border-radius:8px;"></div><div class="t" style="left:579px;width:200px;text-align:center;top:330.60px;font-size:13px;color:#6b7078;font-weight:400;">Today</div><div class="r" style="left:725px;top:315px;width:42px;height:43px;background:#f3f3f5;border:1px solid #ebebef;border-radius:8px;"></div><svg style="left:742.4px;top:328.8px" width="7.6" height="14.2" viewBox="0 0 7.6 14.2"><path d="M7.0 0.6 L0.6 7.1 L7.0 13.6" fill="none" stroke="#a8acb3" stroke-width="1.2" stroke-linecap="round" stroke-linejoin="round"/></svg><div class="r" style="left:775px;top:315px;width:42px;height:43px;background:#fff;border:1px solid #e8e8ec;border-radius:8px;"></div><svg style="left:791.9px;top:328.8px" width="7.6" height="14.2" viewBox="0 0 7.6 14.2"><path d="M0.6 0.6 L7.0 7.1 L0.6 13.6" fill="none" stroke="#2a2f38" stroke-width="1.2" stroke-linecap="round" stroke-linejoin="round"/></svg><div class="t " style="left:831.6px;top:329.67px;font-size:13.5px;color:#161e29;font-weight:400;">September&nbsp; 2024</div><div class="r" style="left:1459px;top:315px;width:225px;height:43px;background:#fff;border:1px solid #e2e3e8;border-radius:8px;"></div><div class="t " style="left:1474.5px;top:328.25px;font-size:14px;color:#161e29;font-weight:400;">Month</div><svg style="left:1658.6px;top:333.4px" width="13.4" height="7.6" viewBox="0 0 13.4 7.6"><path d="M0.6 0.6 L6.7 7.0 L12.8 0.6" fill="none" stroke="#2a2f38" stroke-width="1.3" stroke-linecap="round" stroke-linejoin="round"/></svg><div class="r" style="left:647px;top:372px;width:1037px;height:43.4px;background:#ebebf0;border-radius:8px;"></div><div class="t" style="left:619.8px;width:200px;text-align:center;top:387.14px;font-size:13.3px;color:#161e29;font-weight:400;">Sun</div><div class="t" style="left:768.4px;width:200px;text-align:center;top:387.14px;font-size:13.3px;color:#161e29;font-weight:400;">Mon</div><div class="t" style="left:917.0px;width:200px;text-align:center;top:387.14px;font-size:13.3px;color:#161e29;font-weight:400;">Tue</div><div class="t" style="left:1065.6px;width:200px;text-align:center;top:387.14px;font-size:13.3px;color:#161e29;font-weight:400;">Wed</div><div class="t" style="left:1214.2px;width:200px;text-align:center;top:387.14px;font-size:13.3px;color:#161e29;font-weight:400;">Thu</div><div class="t" style="left:1362.8px;width:200px;text-align:center;top:387.14px;font-size:13.3px;color:#161e29;font-weight:400;">Fri</div><div class="t" style="left:1511.3999999999999px;width:200px;text-align:center;top:387.14px;font-size:13.3px;color:#161e29;font-weight:400;">Sat</div><div class="r" style="left:647.5px;top:430.0px;width:144.6px;height:69px;background:#f8f8f8;border-radius:5px;"></div><div class="t " style="left:651.6px;top:434.35px;font-size:14px;color:#9a9ea6;font-weight:400;">1</div><div class="t " style="left:651.3px;top:455.75px;font-size:14px;color:#9a9ea6;font-weight:400;">Sep</div><div class="r" style="left:796.1px;top:430.0px;width:144.6px;height:69px;background:#f8f8f8;border-radius:5px;"></div><div class="t " style="left:800.2px;top:434.35px;font-size:14px;color:#9a9ea6;font-weight:400;">2</div><div class="r" style="left:944.7px;top:430.0px;width:144.6px;height:69px;background:#f8f8f8;border-radius:5px;"></div><div class="t " style="left:948.8000000000001px;top:434.35px;font-size:14px;color:#9a9ea6;font-weight:400;">3</div><div class="r" style="left:1093.3px;top:430.0px;width:144.6px;height:69px;background:#f8f8f8;border-radius:5px;"></div><div class="t " style="left:1097.3999999999999px;top:434.35px;font-size:14px;color:#9a9ea6;font-weight:400;">4</div><div class="r" style="left:1241.9px;top:430.0px;width:144.6px;height:69px;background:#f8f8f8;border-radius:5px;"></div><div class="t " style="left:1246.0px;top:434.35px;font-size:14px;color:#9a9ea6;font-weight:400;">5</div><div class="r" style="left:1390.5px;top:430.0px;width:144.6px;height:69px;background:#f8f8f8;border-radius:5px;"></div><div class="t " style="left:1394.6px;top:434.35px;font-size:14px;color:#9a9ea6;font-weight:400;">6</div><div class="r" style="left:1539.1px;top:430.0px;width:144.6px;height:69px;background:#f8f8f8;border-radius:5px;"></div><div class="t " style="left:1543.1999999999998px;top:434.35px;font-size:14px;color:#9a9ea6;font-weight:400;">7</div><div class="r" style="left:647.5px;top:503.8px;width:144.6px;height:69px;background:#f8f8f8;border-radius:5px;"></div><div class="t " style="left:651.6px;top:508.15px;font-size:14px;color:#9a9ea6;font-weight:400;">8</div><div class="r" style="left:796.1px;top:503.8px;width:144.6px;height:69px;background:#f8f8f8;border-radius:5px;"></div><div class="t " style="left:800.2px;top:508.15px;font-size:14px;color:#9a9ea6;font-weight:400;">9</div><div class="r" style="left:944.7px;top:503.8px;width:144.6px;height:69px;background:#f8f8f8;border-radius:5px;"></div><div class="t " style="left:948.8000000000001px;top:508.15px;font-size:14px;color:#9a9ea6;font-weight:400;">10</div><div class="r" style="left:1093.3px;top:503.8px;width:144.6px;height:69px;background:#f8f8f8;border-radius:5px;"></div><div class="t " style="left:1097.3999999999999px;top:508.15px;font-size:14px;color:#9a9ea6;font-weight:400;">11</div><div class="r" style="left:1241.9px;top:503.8px;width:144.6px;height:69px;background:#f8f8f8;border-radius:5px;"></div><div class="t " style="left:1246.0px;top:508.15px;font-size:14px;color:#9a9ea6;font-weight:400;">12</div><div class="r" style="left:1390px;top:503px;width:146px;height:71px;background:#dbe8fc;border:1px solid #7c828c;border-radius:5px;"></div><div class="t " style="left:1394.6px;top:508.15px;font-size:14px;color:#161e29;font-weight:400;">13</div><div class="t " style="left:1543.1999999999998px;top:508.15px;font-size:14px;color:#161e29;font-weight:400;">14</div><div class="t " style="left:651.6px;top:581.95px;font-size:14px;color:#161e29;font-weight:400;">15</div><div class="t " style="left:800.2px;top:581.95px;font-size:14px;color:#161e29;font-weight:400;">16</div><div class="t " style="left:948.8000000000001px;top:581.95px;font-size:14px;color:#161e29;font-weight:400;">17</div><div class="t " style="left:1097.3999999999999px;top:581.95px;font-size:14px;color:#161e29;font-weight:400;">18</div><div class="t " style="left:1246.0px;top:581.95px;font-size:14px;color:#161e29;font-weight:400;">19</div><div class="t " style="left:1394.6px;top:581.95px;font-size:14px;color:#161e29;font-weight:400;">20</div><div class="t " style="left:1543.1999999999998px;top:581.95px;font-size:14px;color:#161e29;font-weight:400;">21</div><div class="t " style="left:651.6px;top:655.75px;font-size:14px;color:#161e29;font-weight:400;">22</div><div class="t " style="left:800.2px;top:655.75px;font-size:14px;color:#161e29;font-weight:400;">23</div><div class="t " style="left:948.8000000000001px;top:655.75px;font-size:14px;color:#161e29;font-weight:400;">24</div><div class="t " style="left:1097.3999999999999px;top:655.75px;font-size:14px;color:#161e29;font-weight:400;">25</div><div class="t " style="left:1246.0px;top:655.75px;font-size:14px;color:#161e29;font-weight:400;">26</div><div class="t " style="left:1394.6px;top:655.75px;font-size:14px;color:#161e29;font-weight:400;">27</div><div class="t " style="left:1543.1999999999998px;top:655.75px;font-size:14px;color:#161e29;font-weight:400;">28</div><div class="t " style="left:651.6px;top:729.55px;font-size:14px;color:#161e29;font-weight:400;">29</div><div class="t " style="left:800.2px;top:729.55px;font-size:14px;color:#161e29;font-weight:400;">30</div><div class="t " style="left:948.8000000000001px;top:729.55px;font-size:14px;color:#161e29;font-weight:400;">1</div><div class="t " style="left:948.5px;top:750.95px;font-size:14px;color:#161e29;font-weight:400;">Oct</div><div class="t " style="left:1097.3999999999999px;top:729.55px;font-size:14px;color:#161e29;font-weight:400;">2</div><div class="t " style="left:1246.0px;top:729.55px;font-size:14px;color:#161e29;font-weight:400;">3</div><div class="t " style="left:1394.6px;top:729.55px;font-size:14px;color:#161e29;font-weight:400;">4</div><div class="t " style="left:1543.1999999999998px;top:729.55px;font-size:14px;color:#161e29;font-weight:400;">5</div><div class="t " style="left:651.6px;top:803.35px;font-size:14px;color:#161e29;font-weight:400;">6</div><div class="t " style="left:800.2px;top:803.35px;font-size:14px;color:#161e29;font-weight:400;">7</div><div class="t " style="left:948.8000000000001px;top:803.35px;font-size:14px;color:#161e29;font-weight:400;">8</div><div class="t " style="left:1097.3999999999999px;top:803.35px;font-size:14px;color:#161e29;font-weight:400;">9</div><div class="t " style="left:1246.0px;top:803.35px;font-size:14px;color:#161e29;font-weight:400;">10</div><div class="t " style="left:1394.6px;top:803.35px;font-size:14px;color:#161e29;font-weight:400;">11</div><div class="t " style="left:1543.1999999999998px;top:803.35px;font-size:14px;color:#161e29;font-weight:400;">12</div><div class="r" style="left:977.7px;top:578.5px;width:68px;height:15.5px;background:#93d09a;border-radius:4px;"></div><div class="t" style="left:911.7px;width:200px;text-align:center;top:580.69px;font-size:11px;color:#1c2530;font-weight:400;">New article</div><div class="r" style="left:1126.3px;top:578.5px;width:68px;height:15.5px;background:#93d09a;border-radius:4px;"></div><div class="t" style="left:1060.3px;width:200px;text-align:center;top:580.69px;font-size:11px;color:#1c2530;font-weight:400;">New article</div><div class="r" style="left:266px;top:852px;width:1513px;height:43px;background:linear-gradient(to bottom,rgba(0,0,0,0) 0%,rgba(0,0,0,0.02) 40%,rgba(0,0,0,0.1) 100%);-webkit-mask-image:linear-gradient(to right,#000 0%,#000 70%,transparent 90%);"></div><div class="r" style="left:1709px;top:828.5px;width:55.5px;height:55.5px;background:#fff;border:1px solid #e6e7ec;border-radius:50%;"></div><svg style="left:1727px;top:846px" width="20" height="20" viewBox="0 0 20 20"><g fill="none" stroke="#161c26" stroke-width="2" stroke-linecap="round" stroke-linejoin="round"><path d="M10 3.2 V18"/><path d="M4.4 8.4 L10 3 L15.6 8.4"/></g></svg></div>
</div></body></html>
